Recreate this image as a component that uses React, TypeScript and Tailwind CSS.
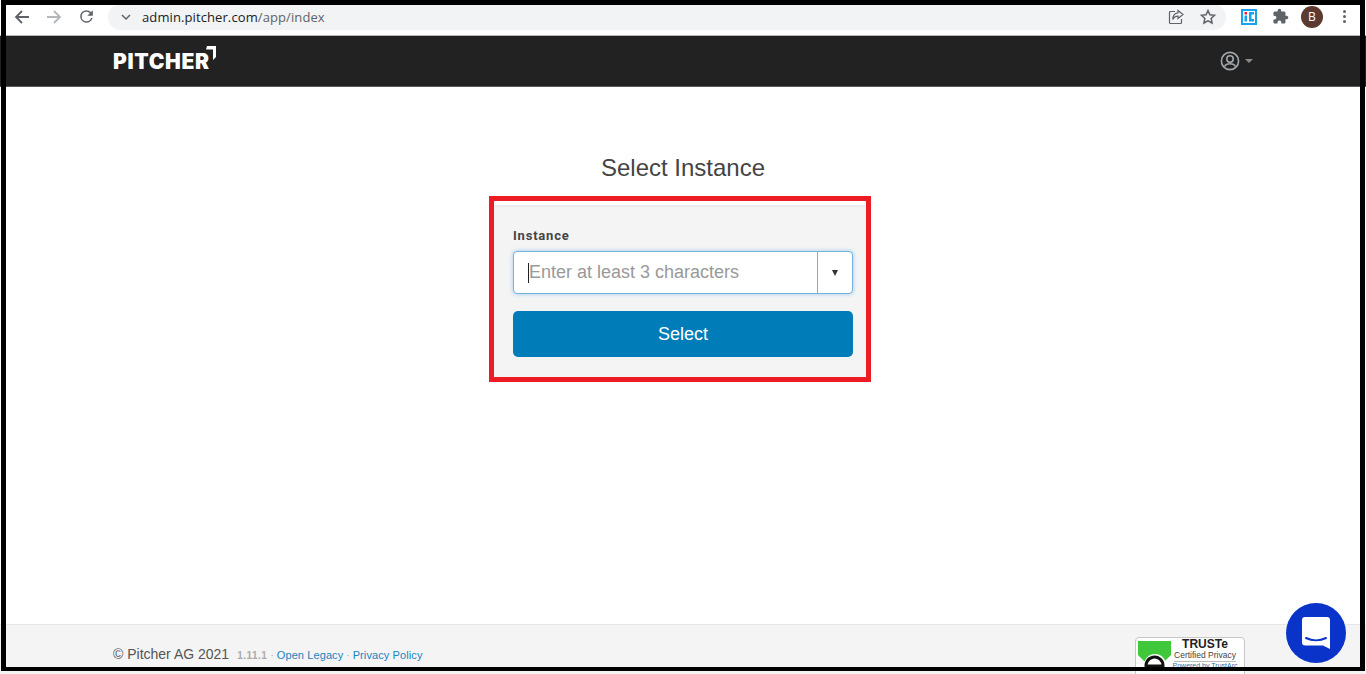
const sans = "font-['Liberation_Sans',Arial,sans-serif]";

function ChromeBar() {
  return (
    <div className="h-[36px] shrink-0 pb-[2px] flex items-center bg-white border-b border-[#b5b5b5] font-['Open_Sans',sans-serif]">
      <div className="w-[108px] shrink-0 flex items-center pl-[13px] gap-[14px]">
        <svg width="18" height="18" viewBox="0 0 18 18" fill="none" stroke="#5f6368" strokeWidth="1.8">
          <path d="M16 9H3M9 3L3 9l6 6" />
        </svg>
        <svg width="18" height="18" viewBox="0 0 18 18" fill="none" stroke="#b4b7ba" strokeWidth="1.8">
          <path d="M2 9h13M9 3l6 6-6 6" />
        </svg>
        <svg width="19" height="19" viewBox="0 0 24 24" fill="#5f6368">
          <path d="M17.65 6.35A7.96 7.96 0 0 0 12 4a8 8 0 1 0 7.73 10h-2.08A6 6 0 1 1 12 6c1.66 0 3.14.69 4.22 1.78L13 11h7V4l-2.35 2.35z" />
        </svg>
      </div>
      <div className="w-[1118px] h-[26px] rounded-full bg-[#f1f3f4] flex items-center pl-[12px] pr-[9px]">
        <svg width="12" height="12" viewBox="0 0 12 12" fill="none" stroke="#5f6368" strokeWidth="1.5">
          <path d="M2 4l4 4 4-4" />
        </svg>
        <div className="ml-[10px] mt-[1px] text-[13px] leading-none tracking-[0.1px] text-[#5f6368]">
          <span className="text-[#202124]">admin.pitcher.com</span>/app/index
        </div>
        <div className="ml-auto flex items-center gap-[14px]">
          <svg width="18" height="18" viewBox="0 0 18 18" fill="none" stroke="#5f6368" strokeWidth="1.2">
            <path d="M8 3.5H3.5a1 1 0 0 0-1 1v10a1 1 0 0 0 1 1h10a1 1 0 0 0 1-1V11" />
            <path d="M11 2.5L16 6.5 11 10.500V8.200C8.500 8.200 6.800 9.300 5.800 11.500 5.800 8 7.800 5.200 11 4.800z" />
          </svg>
          <svg width="18" height="18" viewBox="0 0 24 24" fill="none" stroke="#5f6368" strokeWidth="2">
            <path d="M12 3.5l2.6 5.6 6.1.7-4.5 4.2 1.2 6-5.4-3-5.4 3 1.2-6-4.5-4.2 6.100-.7z" />
          </svg>
        </div>
      </div>
      <div className="flex-1 flex items-center pl-[15px]">
        <svg width="16" height="16" viewBox="0 0 16 16">
          <rect width="16" height="16" fill="#17a2ee" />
          <rect x="2" y="2" width="12" height="12" fill="#fff" />
          <rect x="3.500" y="3" width="2.500" height="2.500" fill="#ee2233" />
          <rect x="3.500" y="6.500" width="2.500" height="6" fill="#17a2ee" />
          <path d="M8 3h5v2.500h-2.500v4.500H13v2.500H8z" fill="#17a2ee" />
        </svg>
        <svg className="ml-[15px]" width="17" height="17" viewBox="0 0 24 24" fill="#5f6368">
          <path d="M20.5 11H19V7c0-1.100-.9-2-2-2h-4V3.500C13 2.120 11.880 1 10.500 1S8 2.120 8 3.500V5H4c-1.100 0-1.990.9-1.990 2v3.800H3.500c1.490 0 2.700 1.210 2.700 2.700s-1.210 2.700-2.700 2.700H2V20c0 1.100.9 2 2 2h3.800v-1.500c0-1.490 1.210-2.700 2.700-2.700 1.490 0 2.700 1.210 2.700 2.700V22H17c1.100 0 2-.9 2-2v-4h1.500c1.380 0 2.500-1.120 2.500-2.500S21.880 11 20.500 11z" />
        </svg>
        <div className="ml-[12px] w-[22px] h-[22px] rounded-full bg-[#5d3a30] text-white text-[12px] flex items-center justify-center">
          B
        </div>
        <div className="ml-[20px] flex flex-col gap-[2px]">
          <div className="w-[3px] h-[3px] rounded-full bg-[#5f6368]" />
          <div className="w-[3px] h-[3px] rounded-full bg-[#5f6368]" />
          <div className="w-[3px] h-[3px] rounded-full bg-[#5f6368]" />
        </div>
      </div>
    </div>
  );
}

function Navbar() {
  return (
    <div className="h-[51px] shrink-0 bg-[#222222] border-b border-[#5a5a5a] flex items-center pl-[113px] pr-[113px]">
      <div className="relative mt-[1px]">
        <div className="font-['Inter',sans-serif] font-black text-white text-[21px] leading-none tracking-[0.7px]">
          PITCHER
        </div>
        <svg className="absolute -top-[5px] -right-[6px]" width="10" height="14" viewBox="0 0 10 14" fill="#fff">
          <path d="M1 0h9v11l-3 3V3.500H0z" />
        </svg>
      </div>
      <div className="ml-auto flex items-center gap-[5px]">
        <svg width="20" height="20" viewBox="0 0 20 20" fill="none" stroke="#a3a8ad" strokeWidth="1.600">
          <circle cx="10" cy="10" r="8.600" />
          <circle cx="10" cy="8" r="3.200" />
          <path d="M4.500 15.500c1-2 3-2.800 5.500-2.800s4.500.8 5.500 2.800" />
        </svg>
        <div className="w-0 h-0 border-x-[4px] border-x-transparent border-t-[4px] border-t-[#8a8a8a]" />
      </div>
    </div>
  );
}

function InstanceCard() {
  return (
    <div className="w-[382px] h-[186px] mt-[12px] mr-[6px] border-[5px] border-[#ed1c24] pt-[4px] bg-white">
      <div className="h-[172px] bg-[#f4f4f4] border-t-2 border-[#ebebeb] rounded-[3px] pl-[19px] pr-[13px] pt-[20px]">
        <div className="text-[13px] leading-[18px] font-bold text-[#444] tracking-[0.8px] font-['Roboto',sans-serif]">
          Instance
        </div>
        <div className="mt-[6px] h-[43px] bg-white border border-[#74b3dd] rounded-[4px] shadow-[0_0_4px_rgba(102,175,233,0.6)] flex items-center">
          <div className="flex-1 flex items-center pl-[14px] text-[18px] text-[#999]">
            <div className="w-px h-[20px] bg-[#222]" />
            <span>Enter at least 3 characters</span>
          </div>
          <div className="w-[35px] h-full border-l border-[#74b3dd] flex items-center justify-center">
            <div className="w-0 h-0 border-x-[3.500px] border-x-transparent border-t-[6px] border-t-[#333]" />
          </div>
        </div>
        <button className="mt-[17px] w-full h-[46px] rounded-[5px] bg-[#007db8] text-white text-[18px] flex items-center justify-center">
          Select
        </button>
      </div>
    </div>
  );
}

function TrusteBadge() {
  return (
    <div className="w-[110px] h-[50px] bg-white border border-[#c8c8c8] rounded-[4px] flex items-start">
      <svg className="ml-[2px] mt-[3px] shrink-0" width="33" height="30" viewBox="0 0 33 30">
        <path d="M0 0h33v14l-6 6H6l-6-6z" fill="#3ec83a" />
        <circle cx="17" cy="24" r="11" fill="#fff" />
        <path d="M8 25h17a8.500 8.500 0 1 0-3 6" fill="none" stroke="#111" strokeWidth="3" />
      </svg>
      <div className="flex-1 flex flex-col items-center pt-[1px] pr-[5px]">
        <div className="text-[12px] leading-[11px] font-bold text-[#222]">TRUSTe</div>
        <div className="text-[8.500px] leading-[10px] text-[#444] whitespace-nowrap">Certified Privacy</div>
        <div className="mt-[1px] w-[62px] border-t border-[#bbb]" />
        <div className="text-[7px] leading-[8px] text-[#1f6fa8] whitespace-nowrap">Powered by TrustArc</div>
      </div>
    </div>
  );
}

function Footer() {
  return (
    <div className="relative h-[50px] shrink-0 bg-[#f4f4f4] border-t border-[#e6e6e6] flex items-start pl-[113px]">
      <div className="mt-[19px] flex items-baseline">
        <span className="text-[14px] leading-[20px] text-[#555]">© Pitcher AG 2021</span>
        <span className="ml-[8px] text-[10px] font-bold text-[#aaa] tracking-[0.5px]">1.11.1</span>
        <span className="mx-[3px] text-[10px] text-[#aaa]">·</span>
        <span className="text-[11px] text-[#1a83bf] tracking-[0.1px]">Open Legacy</span>
        <span className="mx-[3px] text-[10px] text-[#aaa]">·</span>
        <span className="text-[11px] text-[#1a83bf] tracking-[0.1px]">Privacy Policy</span>
      </div>
      <div className="ml-auto mr-[121px] mt-[12px]">
        <TrusteBadge />
      </div>
    </div>
  );
}

export default function App() {
  return (
    <div className={`relative w-full h-[674px] overflow-hidden flex flex-col bg-white ${sans}`}>
      <ChromeBar />
      <Navbar />
      <div className="flex-1 flex flex-col items-center pt-[65px]">
        <h2 className="text-[24px] leading-[32px] text-[#444]">Select Instance</h2>
        <InstanceCard />
      </div>
      <Footer />

      {/* black screenshot frame, sits over the page */}
      <div className="absolute left-px top-0 w-[1364px] h-[671px] border-[5px] border-b-4 border-black pointer-events-none" />
      <div className="absolute left-[1286px] top-[603px] w-[60px] h-[60px] rounded-full bg-[#0a34c9] flex items-center justify-center">
        <svg width="28" height="32" viewBox="0 0 28 32">
          <path d="M3 0h22a3 3 0 0 1 3 3v29l-7-3.500H3a3 3 0 0 1-3-3V3a3 3 0 0 1 3-3z" fill="#fff" />
          <path d="M4 21c6 3 14 3 20 0" fill="none" stroke="#0a34c9" strokeWidth="2" strokeLinecap="round" />
        </svg>
      </div>
    </div>
  );
}
